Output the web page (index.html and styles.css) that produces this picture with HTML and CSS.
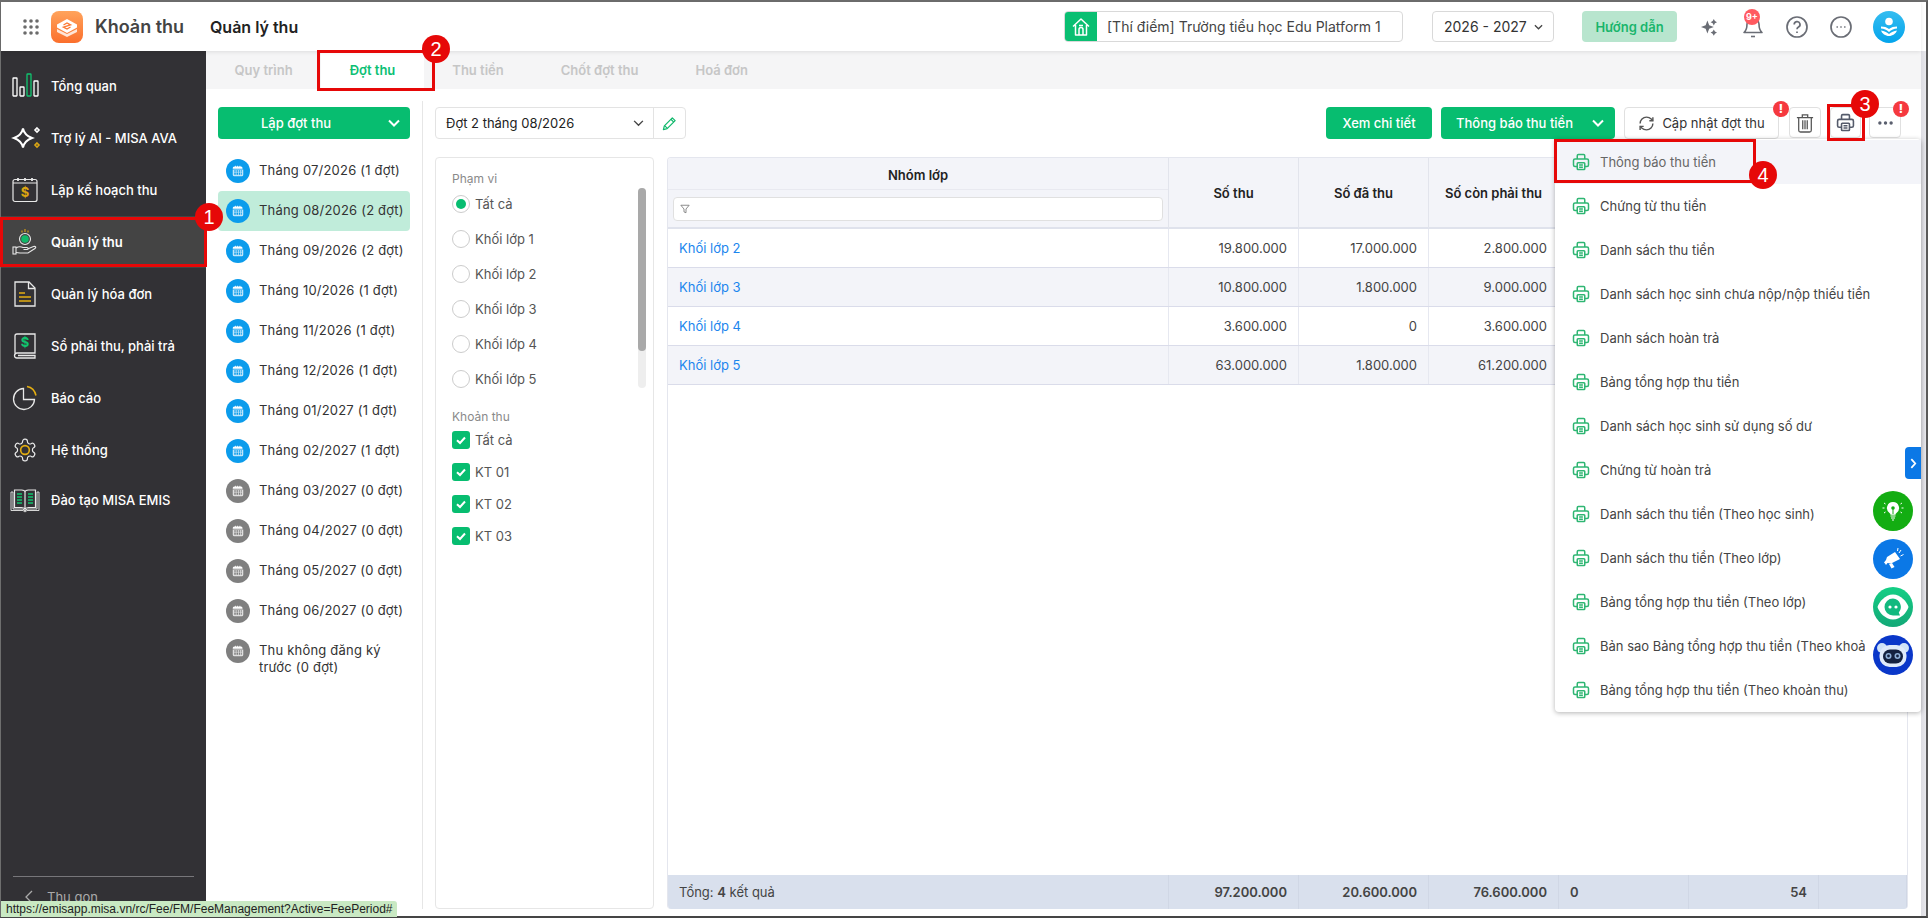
FILE: index.html
```html
<!DOCTYPE html>
<html lang="vi">
<head>
<meta charset="utf-8">
<title>Quản lý thu</title>
<link rel="stylesheet" href="styles.css">
</head>
<body>
<svg class="defs" aria-hidden="true">
    <symbol id="ic-print" viewBox="0 0 24 24">
        <path d="M7 8V3.500A1.500 1.500 0 0 1 8.500 2h7A1.500 1.500 0 0 1 17 3.500V8"/>
        <path d="M7 18H4a2 2 0 0 1-2-2v-6a2 2 0 0 1 2-2h16a2 2 0 0 1 2 2v6a2 2 0 0 1-2 2h-3"/>
        <rect x="7" y="13" width="10" height="9" rx="1"/>
        <path d="M9.500 16h5M9.500 19h5"/>
    </symbol>
    <symbol id="ic-cal" viewBox="0 0 16 16">
        <path fill="#fff" d="M3 2h1V1h1v1h2V1h1v1h2V1h1v1h1a2 2 0 0 1 2 2v1H1V4a2 2 0 0 1 2-2z"/>
        <path fill="#fff" fill-opacity=".75" d="M1 6h14v7a2 2 0 0 1-2 2H3a2 2 0 0 1-2-2z"/>
        <path fill="currentColor" d="M3 7h2v2H3zM6 7h2v2H6zM9 7h2v2H9zM12 7h1v2h-1zM3 10h2v3H3zM6 10h2v3H6zM9 10h2v3H9zM12 10h1v3h-1z"/>
    </symbol>
    <symbol id="ic-check" viewBox="0 0 18 18">
        <path d="M5 9.200l3 2.800 5-5.500"/>
    </symbol>
</svg>

<div class="window">
    <header class="topbar">
        <svg class="apps" viewBox="0 0 16 16" fill="#6b6b6b">
            <circle cx="2" cy="2" r="1.800"/><circle cx="8" cy="2" r="1.800"/><circle cx="14" cy="2" r="1.800"/>
            <circle cx="2" cy="8" r="1.800"/><circle cx="8" cy="8" r="1.800"/><circle cx="14" cy="8" r="1.800"/>
            <circle cx="2" cy="14" r="1.800"/><circle cx="8" cy="14" r="1.800"/><circle cx="14" cy="14" r="1.800"/>
        </svg>
        <svg class="logo" viewBox="0 0 32 32">
            <defs>
                <linearGradient id="logo-bg" x1="0" y1="0" x2="0" y2="1">
                    <stop offset="0" stop-color="#ffa35c"/>
                    <stop offset="1" stop-color="#fb6f2c"/>
                </linearGradient>
            </defs>
            <rect width="32" height="32" rx="8" fill="url(#logo-bg)"/>
            <path fill="#fff" fill-opacity=".8" d="M6 18l10 5 10-5v3l-10 5-10-5z"/>
            <path fill="#fff" d="M16 8l10 5.500v3L16 22 6 16.500v-3z"/>
            <path fill="none" stroke="#fb7a36" stroke-width="1.400" d="M12.500 14l3.500-2 3.500 1.800-7 2.400 3.500 1.800 3.500-2"/>
        </svg>
        <span class="app-name">Khoản thu</span>
        <span class="page-name">Quản lý thu</span>
        <div class="top-right">
            <div class="school">
                <span class="school-icon">
                    <svg viewBox="0 0 20 20" width="20" height="20" fill="none" stroke="#fff" stroke-width="1.500" stroke-linejoin="round">
                        <path d="M2 9.500L10 2l8 7.500M4.500 8v10h11V8"/>
                        <path d="M8 18v-5.500a2 2 0 0 1 4 0V18M8 8.500h4"/>
                    </svg>
                </span>
                <span class="school-name">[Thí điểm] Trường tiểu học Edu Platform 1</span>
            </div>
            <div class="year">
                <span>2026 - 2027</span>
                <svg viewBox="0 0 10 6" width="9" height="6" fill="none" stroke="#444" stroke-width="1.400"><path d="M1 1l4 4 4-4"/></svg>
            </div>
            <div class="guide">Hướng dẫn</div>
            <svg class="top-icon" viewBox="-3 -3 30 30" fill="#6a6d75">
                <path d="M9 5l2.200 5.800L17 13l-5.800 2.200L9 21l-2.200-5.800L1 13l5.800-2.200z" transform="translate(1 -1)"/>
                <path d="M18 2l1.400 2.600L22 6l-2.600 1.400L18 10l-1.400-2.600L14 6l2.600-1.400z"/>
                <path d="M18 15l1.400 2.600L22 19l-2.600 1.400L18 23l-1.400-2.600L14 19l2.600-1.400z"/>
            </svg>
            <div class="bell">
                <svg class="top-icon" viewBox="0 0 24 24" fill="none" stroke="#6a6d75" stroke-width="1.600" stroke-linejoin="round">
                    <path d="M6 9a6 6 0 0 1 12 0c0 6 3 8.500 3 8.500H3s3-2.500 3-8.500"/>
                    <path d="M10 21.500h4"/>
                </svg>
                <span class="bell-count">9+</span>
            </div>
            <svg class="top-icon" viewBox="0 0 24 24" fill="none" stroke="#6a6d75" stroke-width="1.700">
                <circle cx="12" cy="12" r="10"/>
                <path d="M9.200 9.500a2.900 2.900 0 1 1 4.300 2.500c-1 .6-1.500 1.200-1.500 2.200"/>
                <path d="M12 16.500v1.400"/>
            </svg>
            <svg class="top-icon" viewBox="0 0 24 24" fill="none" stroke="#6a6d75" stroke-width="1.700">
                <circle cx="12" cy="12" r="10"/>
                <path d="M7.500 12h1.400M11.300 12h1.400M15.100 12h1.400"/>
            </svg>
            <svg class="avatar" viewBox="0 0 32 32">
                <defs>
                    <linearGradient id="avatar-bg" x1="0" y1="0" x2="0" y2="1">
                        <stop offset="0" stop-color="#35bdf0"/>
                        <stop offset="1" stop-color="#03a4ec"/>
                    </linearGradient>
                </defs>
                <circle cx="16" cy="16" r="16" fill="url(#avatar-bg)"/>
                <circle cx="16" cy="10.500" r="3.800" fill="#fff"/>
                <path fill="#fff" d="M8 15.500c3 0 6 .8 8 2.500 2-1.700 5-2.500 8-2.500v2c-3 .3-5.600 1.300-8 3.500-2.400-2.200-5-3.200-8-3.500z"/>
                <path fill="#fff" d="M8 19.500c3 .5 5.800 1.500 8 3.500 2.200-2 5-3 8-3.500-1 3-4.500 5.500-8 5.500s-7-2.500-8-5.500z"/>
            </svg>
        </div>
    </header>

    <div class="body">
        <nav class="sidebar">
            <a class="nav-item">
                <svg class="nav-icon" viewBox="0 0 26 26" fill="none" stroke="#fff" stroke-width="1.300">
                    <rect x="1" y="5" width="4" height="18" rx=".5"/>
                    <rect x="8" y="14" width="4" height="9" rx=".5"/>
                    <rect x="15" y="1" width="4" height="22" rx=".5" stroke="#10c46f"/>
                    <rect x="22" y="8" width="4" height="15" rx=".5"/>
                </svg>
                <span>Tổng quan</span>
            </a>
            <a class="nav-item">
                <svg class="nav-icon" viewBox="0 0 26 26" fill="none" stroke="#fff" stroke-width="1.600">
                    <path d="M11 3.500c1 5 3.500 7.500 9 9.500-5.500 2-8 4.500-9 9.500-1-5-3.500-7.500-9-9.500 5.500-2 8-4.500 9-9.500z" stroke-width="2"/>
                    <path d="M25 3l2 2-2 2-2-2z"/>
                    <path d="M25 18l2 2-2 2-2-2z" stroke="#d9a514"/>
                </svg>
                <span>Trợ lý AI - MISA AVA</span>
            </a>
            <a class="nav-item">
                <svg class="nav-icon" viewBox="0 0 26 26" fill="none" stroke="#e8e8e8" stroke-width="1.200">
                    <rect x="1" y="2.500" width="24" height="22" rx="2"/>
                    <path d="M1 6h24" stroke-width="1"/>
                    <path d="M6 1v3M13 1v3M20 1v3" stroke-width="1.800"/>
                    <text class="nav-dollar" x="13" y="20" fill="#dba511" stroke="none">$</text>
                </svg>
                <span>Lập kế hoạch thu</span>
            </a>
            <a class="nav-item active">
                <svg class="nav-icon" viewBox="0 0 26 26" fill="none" stroke="#e8e8e8" stroke-width="1.100">
                    <circle cx="13" cy="10" r="5.500"/>
                    <circle cx="13" cy="10" r="3.800" fill="#10b868" stroke="none"/>
                    <path d="M10 1.500v2M13 0v3M16 1.500v2" stroke="#dba511"/>
                    <rect x="1" y="18" width="3" height="7"/>
                    <path d="M4 19c3-2 5-1.500 7-.5h4c1.500 0 1.500 2 0 2h-3.500M15.500 20l6-2.500c2-.5 3 1 1.500 2L16 24H8l-4-.5"/>
                </svg>
                <span>Quản lý thu</span>
            </a>
            <a class="nav-item">
                <svg class="nav-icon" viewBox="0 0 26 26" fill="none" stroke="#e8e8e8" stroke-width="1.300">
                    <path d="M3 1h14l6 6v18H3z"/>
                    <path d="M16.500 1v6.500H23"/>
                    <path d="M7 12h6M7 16h12M7 20h12" stroke="#e3ad12" stroke-width="1.600"/>
                </svg>
                <span>Quản lý hóa đơn</span>
            </a>
            <a class="nav-item">
                <svg class="nav-icon" viewBox="0 0 26 26" fill="none" stroke="#e8e8e8" stroke-width="1.300">
                    <path d="M3 22V3a2 2 0 0 1 2-2h18v19H5a2.500 2.500 0 0 0 0 5h18v-2.500H6"/>
                    <text class="nav-dollar" x="13" y="14" fill="#10c46f" stroke="none">$</text>
                </svg>
                <span>Sổ phải thu, phải trả</span>
            </a>
            <a class="nav-item">
                <svg class="nav-icon" viewBox="0 0 26 26" fill="none" stroke="#e8e8e8" stroke-width="1.300">
                    <path d="M11.500 3.500a10.500 10.500 0 1 0 11 11h-11z"/>
                    <path d="M15 1.500c4.500.8 8 4.500 9 9" stroke="#e3ad12" stroke-width="1.500"/>
                </svg>
                <span>Báo cáo</span>
            </a>
            <a class="nav-item">
                <svg class="nav-icon" viewBox="0 0 24 24" fill="none" stroke="#e8e8e8" stroke-width="1.100">
                    <path d="M12.220 2h-.44a2 2 0 0 0-2 2v.18a2 2 0 0 1-1 1.730l-.43.25a2 2 0 0 1-2 0l-.15-.08a2 2 0 0 0-2.730.73l-.22.38a2 2 0 0 0 .73 2.730l.15.1a2 2 0 0 1 1 1.720v.51a2 2 0 0 1-1 1.740l-.15.09a2 2 0 0 0-.73 2.730l.22.38a2 2 0 0 0 2.730.73l.15-.08a2 2 0 0 1 2 0l.43.25a2 2 0 0 1 1 1.730V20a2 2 0 0 0 2 2h.44a2 2 0 0 0 2-2v-.18a2 2 0 0 1 1-1.730l.43-.25a2 2 0 0 1 2 0l.15.08a2 2 0 0 0 2.730-.73l.22-.39a2 2 0 0 0-.73-2.730l-.15-.08a2 2 0 0 1-1-1.740v-.5a2 2 0 0 1 1-1.740l.15-.09a2 2 0 0 0 .73-2.730l-.22-.38a2 2 0 0 0-2.730-.73l-.15.08a2 2 0 0 1-2 0l-.43-.25a2 2 0 0 1-1-1.730V4a2 2 0 0 0-2-2z"/>
                    <circle cx="12" cy="12" r="4" stroke="#e3ad12" stroke-width="1.500"/>
                </svg>
                <span>Hệ thống</span>
            </a>
            <a class="nav-item last">
                <svg class="nav-icon" viewBox="0 0 26 26" fill="none" stroke="#e8e8e8" stroke-width="1.200">
                    <path d="M-1 5h2v17h10l2 2 2-2h10V5h2v18.500H15l-2 1.500-2-1.500H-1z" stroke-width=".9"/>
                    <path d="M2.500 3h7c2 0 3.500 1 3.500 2.500V22c-1-1-2-1.500-3.500-1.500h-7zM23.500 3h-7C14.500 3 13 4 13 5.500V22c1-1 2-1.500 3.500-1.500h7z"/>
                    <path d="M5 7h5M5 10h5M5 13h5M5 16h5M16 7h5M16 10h5M16 13h5M16 16h5" stroke="#10c46f" stroke-width="1.600"/>
                </svg>
                <span>Đào tạo MISA EMIS</span>
            </a>
            <div class="collapse">
                <svg viewBox="0 0 8 14" width="8" height="14" fill="none" stroke="#aaa" stroke-width="1.300"><path d="M7 1L1 7l6 6"/></svg>
                <span>Thu gọn</span>
            </div>
        </nav>

        <main class="main">
            <div class="tabs">
                <div class="tab">Quy trình</div>
                <div class="tab selected">Đợt thu</div>
                <div class="tab">Thu tiền</div>
                <div class="tab">Chốt đợt thu</div>
                <div class="tab">Hoá đơn</div>
            </div>

            <div class="work">
                <aside class="periods">
                    <div class="create-btn">
                        <span class="create-label">Lập đợt thu</span>
                        <svg class="create-arrow" viewBox="0 0 12 8" width="12" height="8" fill="none" stroke="#fff" stroke-width="2"><path d="M1 1.500l5 5 5-5"/></svg>
                    </div>
                    <ul class="period-list">
                        <li class="period"><span class="period-dot"><svg><use href="#ic-cal"/></svg></span><span class="period-text">Tháng 07/2026 (1 đợt)</span></li>
                        <li class="period current"><span class="period-dot"><svg><use href="#ic-cal"/></svg></span><span class="period-text">Tháng 08/2026 (2 đợt)</span></li>
                        <li class="period"><span class="period-dot"><svg><use href="#ic-cal"/></svg></span><span class="period-text">Tháng 09/2026 (2 đợt)</span></li>
                        <li class="period"><span class="period-dot"><svg><use href="#ic-cal"/></svg></span><span class="period-text">Tháng 10/2026 (1 đợt)</span></li>
                        <li class="period"><span class="period-dot"><svg><use href="#ic-cal"/></svg></span><span class="period-text">Tháng 11/2026 (1 đợt)</span></li>
                        <li class="period"><span class="period-dot"><svg><use href="#ic-cal"/></svg></span><span class="period-text">Tháng 12/2026 (1 đợt)</span></li>
                        <li class="period"><span class="period-dot"><svg><use href="#ic-cal"/></svg></span><span class="period-text">Tháng 01/2027 (1 đợt)</span></li>
                        <li class="period"><span class="period-dot"><svg><use href="#ic-cal"/></svg></span><span class="period-text">Tháng 02/2027 (1 đợt)</span></li>
                        <li class="period empty"><span class="period-dot"><svg><use href="#ic-cal"/></svg></span><span class="period-text">Tháng 03/2027 (0 đợt)</span></li>
                        <li class="period empty"><span class="period-dot"><svg><use href="#ic-cal"/></svg></span><span class="period-text">Tháng 04/2027 (0 đợt)</span></li>
                        <li class="period empty"><span class="period-dot"><svg><use href="#ic-cal"/></svg></span><span class="period-text">Tháng 05/2027 (0 đợt)</span></li>
                        <li class="period empty"><span class="period-dot"><svg><use href="#ic-cal"/></svg></span><span class="period-text">Tháng 06/2027 (0 đợt)</span></li>
                        <li class="period empty"><span class="period-dot"><svg><use href="#ic-cal"/></svg></span><span class="period-text">Thu không đăng ký trước (0 đợt)</span></li>
                    </ul>
                </aside>

                <section class="detail">
                    <div class="toolbar">
                        <div class="batch">
                            <div class="batch-name">
                                <span>Đợt 2 tháng 08/2026</span>
                                <svg viewBox="0 0 12 8" width="11" height="7" fill="none" stroke="#444" stroke-width="1.600"><path d="M1 1l5 5 5-5"/></svg>
                            </div>
                            <div class="batch-edit">
                                <svg viewBox="0 0 16 16" width="15" height="15" fill="none" stroke="#11b86c" stroke-width="1.300" stroke-linejoin="round">
                                    <path d="M11 2l3 3-8.500 8.500L1.500 14.500 2.500 10.500z"/>
                                    <path d="M9.500 3.500l3 3M3 10.500l2.500 2.500"/>
                                </svg>
                            </div>
                        </div>
                        <div class="actions">
                            <div class="btn-green detail-btn">Xem chi tiết</div>
                            <div class="btn-green notice-btn">
                                <span>Thông báo thu tiền</span>
                                <svg viewBox="0 0 12 8" width="12" height="8" fill="none" stroke="#fff" stroke-width="2"><path d="M1 1.500l5 5 5-5"/></svg>
                            </div>
                            <div class="btn-line update-btn">
                                <svg viewBox="0 0 24 24" width="17" height="17" fill="none" stroke="#555" stroke-width="2">
                                    <path d="M3 12a9 9 0 0 1 9-9 9.750 9.750 0 0 1 6.740 2.740L21 8"/>
                                    <path d="M21 3v5h-5"/>
                                    <path d="M21 12a9 9 0 0 1-9 9 9.750 9.750 0 0 1-6.740-2.740L3 16"/>
                                    <path d="M8 16H3v5"/>
                                </svg>
                                <span>Cập nhật đợt thu</span>
                            </div>
                            <div class="btn-line icon-btn">
                                <svg viewBox="0 0 20 22" width="18" height="20" fill="none" stroke="#555" stroke-width="1.400">
                                    <path d="M1 5h18M7 5V2h6v3"/>
                                    <path d="M3 5v14a2 2 0 0 0 2 2h10a2 2 0 0 0 2-2V5"/>
                                    <path d="M7.500 8v10M10 8v10M12.500 8v10"/>
                                </svg>
                            </div>
                            <div class="btn-line icon-btn print-btn">
                                <svg width="19" height="19"><use href="#ic-print"/></svg>
                            </div>
                            <div class="btn-line icon-btn more-btn">
                                <svg viewBox="0 0 16 4" width="15" height="4" fill="#5a5f6e"><circle cx="2" cy="2" r="1.800"/><circle cx="8" cy="2" r="1.800"/><circle cx="14" cy="2" r="1.800"/></svg>
                            </div>
                        </div>
                    </div>

                    <div class="content">
                        <div class="filters">
                            <div class="scope">
                                <div class="filter-label">Phạm vi</div>
                                <label class="radio on"><i></i>Tất cả</label>
                                <label class="radio"><i></i>Khối lớp 1</label>
                                <label class="radio"><i></i>Khối lớp 2</label>
                                <label class="radio"><i></i>Khối lớp 3</label>
                                <label class="radio"><i></i>Khối lớp 4</label>
                                <label class="radio"><i></i>Khối lớp 5</label>
                                <div class="scroll-track"><div class="scroll-thumb"></div></div>
                            </div>
                            <div class="filter-label fees-label">Khoản thu</div>
                            <label class="check"><svg><use href="#ic-check"/></svg>Tất cả</label>
                            <label class="check"><svg><use href="#ic-check"/></svg>KT 01</label>
                            <label class="check"><svg><use href="#ic-check"/></svg>KT 02</label>
                            <label class="check"><svg><use href="#ic-check"/></svg>KT 03</label>
                        </div>

                        <div class="grid">
                            <div class="grid-row grid-head">
                                <div class="head-first">
                                    <div class="head-title">Nhóm lớp</div>
                                    <div class="head-filter">
                                        <div class="filter-input">
                                            <svg viewBox="0 0 12 12" width="10" height="10" fill="none" stroke="#777" stroke-width="1"><path d="M1 1.500h10L7.200 6v4.500L4.800 9.500V6z"/></svg>
                                        </div>
                                    </div>
                                </div>
                                <div class="head-cell">Số thu</div>
                                <div class="head-cell">Số đã thu</div>
                                <div class="head-cell">Số còn phải thu</div>
                                <div class="head-cell"></div>
                                <div class="head-cell"></div>
                                <div class="head-cell"></div>
                            </div>
                            <div class="grid-rows">
                                <div class="grid-row data">
                                    <div class="cell"><a class="link">Khối lớp 2</a></div>
                                    <div class="cell num">19.800.000</div><div class="cell num">17.000.000</div><div class="cell num">2.800.000</div>
                                    <div class="cell"></div><div class="cell"></div><div class="cell"></div>
                                </div>
                                <div class="grid-row data">
                                    <div class="cell"><a class="link">Khối lớp 3</a></div>
                                    <div class="cell num">10.800.000</div><div class="cell num">1.800.000</div><div class="cell num">9.000.000</div>
                                    <div class="cell"></div><div class="cell"></div><div class="cell"></div>
                                </div>
                                <div class="grid-row data">
                                    <div class="cell"><a class="link">Khối lớp 4</a></div>
                                    <div class="cell num">3.600.000</div><div class="cell num">0</div><div class="cell num">3.600.000</div>
                                    <div class="cell"></div><div class="cell"></div><div class="cell"></div>
                                </div>
                                <div class="grid-row data">
                                    <div class="cell"><a class="link">Khối lớp 5</a></div>
                                    <div class="cell num">63.000.000</div><div class="cell num">1.800.000</div><div class="cell num">61.200.000</div>
                                    <div class="cell"></div><div class="cell"></div><div class="cell"></div>
                                </div>
                            </div>
                            <div class="grid-row grid-foot">
                                <div class="cell foot-label">Tổng: <b>4</b> kết quả</div>
                                <div class="cell num">97.200.000</div>
                                <div class="cell num">20.600.000</div>
                                <div class="cell num">76.600.000</div>
                                <div class="cell">0</div>
                                <div class="cell num">54</div>
                                <div class="cell"></div>
                            </div>
                        </div>
                    </div>
                </section>
            </div>
        </main>
        <div class="edge"></div>
    </div>

    <!-- menu mo tu nut in -->
    <ul class="print-menu">
        <li class="hover"><svg><use href="#ic-print"/></svg>Thông báo thu tiền</li>
        <li><svg><use href="#ic-print"/></svg>Chứng từ thu tiền</li>
        <li><svg><use href="#ic-print"/></svg>Danh sách thu tiền</li>
        <li><svg><use href="#ic-print"/></svg>Danh sách học sinh chưa nộp/nộp thiếu tiền</li>
        <li><svg><use href="#ic-print"/></svg>Danh sách hoàn trả</li>
        <li><svg><use href="#ic-print"/></svg>Bảng tổng hợp thu tiền</li>
        <li><svg><use href="#ic-print"/></svg>Danh sách học sinh sử dụng số dư</li>
        <li><svg><use href="#ic-print"/></svg>Chứng từ hoàn trả</li>
        <li><svg><use href="#ic-print"/></svg>Danh sách thu tiền (Theo học sinh)</li>
        <li><svg><use href="#ic-print"/></svg>Danh sách thu tiền (Theo lớp)</li>
        <li><svg><use href="#ic-print"/></svg>Bảng tổng hợp thu tiền (Theo lớp)</li>
        <li><svg><use href="#ic-print"/></svg>Bản sao Bảng tổng hợp thu tiền (Theo khoản thu)</li>
        <li><svg><use href="#ic-print"/></svg>Bảng tổng hợp thu tiền (Theo khoản thu)</li>
    </ul>

    <!-- khung tien ich ben phai -->
    <div class="dock-toggle">
        <svg viewBox="0 0 8 12" width="7" height="11" fill="none" stroke="#fff" stroke-width="2"><path d="M1.500 1l4.500 5-4.500 5"/></svg>
    </div>
    <div class="dock">
        <svg class="dock-item" viewBox="0 0 40 40">
            <circle cx="20" cy="20" r="20" fill="#13ad12"/>
            <path fill="#fff" d="M20 11a6 6 0 0 0-3.500 10.900c.6.500 1 1.100 1 1.800h5c0-.7.4-1.300 1-1.800A6 6 0 0 0 20 11z"/>
            <path d="M17.500 25h5M18 27h4M19 29h2" stroke="#fff" stroke-width="1.200"/>
            <circle cx="20" cy="17" r="1.800" fill="#13ad12"/>
            <path d="M20 18v5" stroke="#13ad12" stroke-width="1"/>
            <path d="M11 12l1.500 1M29 12l-1.500 1M9.500 17h2M28.500 17h2M11 22l1.500-1M29 22l-1.500-1" stroke="#fff" stroke-width="1"/>
        </svg>
        <svg class="dock-item" viewBox="0 0 40 40">
            <circle cx="20" cy="20" r="20" fill="#0b78e6"/>
            <path fill="#fff" d="M22 13l5 7-9 4.500-3.500-.5L13 26l-1-1.500-1-1 2-2.500 1-3z"/>
            <path fill="#fff" d="M16 25l3-1 2.500 4-3 1.500z"/>
            <path d="M26 14l2-3M27.500 17l3-1.500M24.500 12l.5-3" stroke="#fff" stroke-width="1"/>
        </svg>
        <svg class="dock-item" viewBox="0 0 40 40">
            <defs>
                <linearGradient id="chat-bg" x1="0" y1="0" x2="0" y2="1">
                    <stop offset="0" stop-color="#14cf85"/>
                    <stop offset="1" stop-color="#13a877"/>
                </linearGradient>
            </defs>
            <circle cx="20" cy="20" r="20" fill="url(#chat-bg)"/>
            <path fill="#fff" d="M20 7.500C12 7.500 6 15 4.500 20 6 25 12 32.500 20 32.500S34 25 35.500 20C34 15 28 7.500 20 7.500z"/>
            <path fill="#12b97f" d="M20 11.500a8.500 8.500 0 1 0 0 17h7l-1.200-3a8.500 8.500 0 0 0-5.800-14z"/>
            <circle cx="17" cy="20" r="1.600" fill="#fff"/>
            <circle cx="23" cy="20" r="1.600" fill="#fff"/>
        </svg>
        <svg class="dock-item" viewBox="0 0 40 40">
            <circle cx="20" cy="20" r="20" fill="#0a37c9"/>
            <circle cx="9" cy="13" r="5" fill="#cfe2f7"/>
            <circle cx="31" cy="13" r="5" fill="#cfe2f7"/>
            <rect x="6.500" y="10" width="27" height="22" rx="10" fill="#dfeafa"/>
            <rect x="10" y="14.500" width="20" height="14" rx="7" fill="#14213f"/>
            <circle cx="15.500" cy="21" r="3" fill="#8fb0d8"/>
            <circle cx="24.500" cy="21" r="3" fill="#8fb0d8"/>
            <circle cx="15.500" cy="21" r="1.400" fill="#14213f"/>
            <circle cx="24.500" cy="21" r="1.400" fill="#14213f"/>
        </svg>
    </div>

    <!-- khung danh dau huong dan -->
    <div class="mark mark-nav"></div>
    <div class="mark mark-tab"></div>
    <div class="mark mark-print"></div>
    <div class="mark mark-item"></div>
    <span class="step step-1">1</span>
    <span class="step step-2">2</span>
    <span class="step step-3">3</span>
    <span class="step step-4">4</span>
    <span class="alert alert-update">!</span>
    <span class="alert alert-more">!</span>

    <div class="status-url">https://emisapp.misa.vn/rc/Fee/FM/FeeManagement?Active=FeePeriod#</div>
</div>
</body>
</html>
```

FILE: styles.css
```css
* {
    margin: 0;
    padding: 0;
    box-sizing: border-box;
}

html, body {
    width: 100%;
    height: 100%;
    overflow: hidden;
    font-family: 'Inter', 'Noto Sans', sans-serif;
    font-size: 13px;
    color: #333;
    background: #fff;
}

ul {
    list-style: none;
}

.defs {
    display: none;
}

svg use {
    fill: none;
    stroke: currentColor;
    stroke-width: 2;
}

.window {
    display: flex;
    flex-direction: column;
    height: 100%;
    border-top: 2px solid #6e6e6e;
    border-bottom: 2px solid #454545;
    border-left: 1px solid #6e6e6e;
    border-right: 2px solid #5a5a5a;
    background: #fff;
}

/* header */
.topbar {
    display: flex;
    align-items: center;
    height: 49px;
    flex: none;
    padding-left: 22px;
    margin-right: 5px;
    background: #fff;
    box-shadow: 0 1px 4px rgba(0, 0, 0, 0.1);
    position: relative;
    z-index: 2;
}

.apps {
    width: 16px;
    height: 16px;
}

.logo {
    width: 32px;
    height: 32px;
    margin-left: 12px;
}

.app-name {
    margin-left: 12px;
    font-size: 18px;
    font-weight: 600;
    color: #444;
    width: 115px;
}

.page-name {
    font-size: 16px;
    font-weight: 600;
    color: #222;
}

.top-right {
    display: flex;
    align-items: center;
    margin-left: auto;
    padding-right: 16px;
}

.school {
    display: flex;
    align-items: center;
    width: 339px;
    height: 31px;
    border: 1px solid #d9d9d9;
    border-radius: 4px;
    overflow: hidden;
}

.school-icon {
    display: flex;
    align-items: center;
    justify-content: center;
    width: 32px;
    height: 100%;
    background: #0abf72;
}

.school-name {
    margin-left: 10px;
    font-size: 14px;
    color: #444;
}

.year {
    display: flex;
    align-items: center;
    justify-content: space-between;
    width: 122px;
    height: 31px;
    margin-left: 29px;
    padding: 0 10px 0 11px;
    border: 1px solid #d9d9d9;
    border-radius: 4px;
    font-size: 14px;
    color: #333;
}

.guide {
    display: flex;
    align-items: center;
    justify-content: center;
    width: 95px;
    height: 31px;
    margin-left: 28px;
    border-radius: 4px;
    background: #b8e5ce;
    color: #19b56c;
    font-weight: 600;
}

.top-icon {
    display: block;
    width: 24px;
    height: 24px;
    margin-left: 20px;
}

.bell {
    position: relative;
}

.bell-count {
    position: absolute;
    left: 23px;
    top: -6px;
    width: 16px;
    height: 16px;
    border-radius: 50%;
    background: #ff5a60;
    color: #fff;
    font-size: 9px;
    font-weight: 700;
    line-height: 16px;
    text-align: center;
}

.avatar {
    width: 32px;
    height: 32px;
    margin-left: 20px;
}

.body {
    display: flex;
    flex: 1;
    min-height: 0;
}

/* menu trai */
.sidebar {
    position: relative;
    width: 205px;
    flex: none;
    padding-top: 9px;
    background: #323135;
    color: #fff;
}

.nav-item {
    display: flex;
    align-items: center;
    gap: 13px;
    height: 52px;
    padding-left: 11px;
    font-weight: 500;
}

.nav-item.last {
    height: 48px;
}

.nav-item.active {
    background: #444;
    font-weight: 600;
}

.nav-icon {
    width: 26px;
    height: 26px;
    flex: none;
    overflow: visible;
}

.nav-dollar {
    font-family: 'Inter', sans-serif;
    font-size: 13px;
    font-weight: 700;
    text-anchor: middle;
}

.collapse {
    position: absolute;
    left: 12px;
    right: 12px;
    bottom: 0;
    display: flex;
    align-items: center;
    gap: 14px;
    height: 40px;
    padding: 1px 0 0 12px;
    border-top: 1px solid #77767a;
    color: #aaa;
}

/* noi dung */
.main {
    flex: 1;
    min-width: 0;
    display: flex;
    flex-direction: column;
}

.edge {
    width: 5px;
    flex: none;
    background: linear-gradient(90deg, #dcdce2, #e8e8ec);
}

.tabs {
    display: flex;
    height: 38px;
    flex: none;
    background: #f5f5f6;
}

.tab {
    padding: 0 28.5px;
    line-height: 38px;
    font-weight: 600;
    color: #c6c6c6;
}

.tab.selected {
    background: #fff;
    color: #0cbf74;
}

.work {
    display: flex;
    flex: 1;
    min-height: 0;
}

.periods {
    width: 217px;
    flex: none;
    margin: 12px 0 7px;
    padding: 6px 12px 0;
    border-right: 1px solid #e6e6e6;
}

.create-btn {
    display: flex;
    align-items: center;
    height: 32px;
    border-radius: 4px;
    background: #07bd70;
    color: #fff;
    font-weight: 500;
}

.create-label {
    flex: 1;
    text-align: center;
}

.create-arrow {
    margin: 0 10px 0 14px;
}

.period-list {
    margin-top: 12px;
}

.period {
    display: flex;
    align-items: flex-start;
    gap: 9px;
    padding: 8px 0 8px 8px;
    height: 40px;
    border-radius: 4px;
    color: #333;
    line-height: 17px;
}

.period.current {
    background: #c0ecda;
}

.period-dot {
    display: flex;
    align-items: center;
    justify-content: center;
    width: 24px;
    height: 24px;
    flex: none;
    border-radius: 50%;
    background: #0b9cec;
    color: #0b9cec;
}

.period.empty .period-dot {
    background: #7f7f7f;
    color: #7f7f7f;
}

.period-dot svg {
    width: 12px;
    height: 12px;
}

.period-dot svg use {
    fill: initial;
    stroke: none;
}

.period-text {
    margin-top: 3px;
    letter-spacing: 0.2px;
}

.detail {
    flex: 1;
    min-width: 0;
    display: flex;
    flex-direction: column;
    padding: 18px 13px 7px 12px;
}

.toolbar {
    display: flex;
    justify-content: space-between;
    height: 32px;
    flex: none;
    padding-right: 7px;
}

.batch {
    display: flex;
    width: 251px;
    border: 1px solid #e3e3e3;
    border-radius: 4px;
}

.batch-name {
    display: flex;
    align-items: center;
    justify-content: space-between;
    width: 218px;
    padding: 0 9px 0 10px;
    border-right: 1px solid #e3e3e3;
    color: #222;
}

.batch-edit {
    flex: 1;
    display: flex;
    align-items: center;
    justify-content: center;
}

.actions {
    display: flex;
    gap: 9px;
}

.btn-green {
    display: flex;
    align-items: center;
    height: 32px;
    border-radius: 4px;
    background: #07bd70;
    color: #fff;
    font-weight: 500;
}

.detail-btn {
    width: 106px;
    justify-content: center;
}

.notice-btn {
    width: 174px;
    justify-content: space-between;
    padding: 0 11px 0 15px;
}

.btn-line {
    display: flex;
    align-items: center;
    justify-content: center;
    height: 32px;
    border: 1px solid #e0e0e0;
    border-radius: 4px;
    color: #333;
}

.update-btn {
    width: 155px;
    gap: 7px;
    margin-right: 1px;
}

.icon-btn {
    width: 32px;
    height: 31px;
}

.print-btn {
    width: 31px;
    color: #555b6b;
}

.more-btn {
    margin-left: -1px;
}

.content {
    display: flex;
    gap: 13px;
    flex: 1;
    min-height: 0;
    margin-top: 18px;
}

.filters {
    width: 219px;
    flex: none;
    padding: 14px 0 0 16px;
    border: 1px solid #e6e6e6;
    border-radius: 4px;
    color: #555;
}

.filter-label {
    font-size: 12px;
    line-height: 14px;
    color: #8a8a8a;
}

.scope {
    position: relative;
}

.fees-label {
    margin-top: 14px;
}

.radio {
    display: flex;
    align-items: center;
    gap: 5px;
    height: 35px;
}

.radio i {
    display: flex;
    align-items: center;
    justify-content: center;
    width: 18px;
    height: 18px;
    border: 1px solid #ccc;
    border-radius: 50%;
}

.radio.on i::after {
    content: "";
    width: 10px;
    height: 10px;
    border-radius: 50%;
    background: #07bd70;
}

.scroll-track {
    position: absolute;
    left: 186px;
    top: 16px;
    width: 8px;
    height: 200px;
    border-radius: 4px;
    background: #eee;
}

.scroll-thumb {
    height: 163px;
    border-radius: 4px;
    background: #a9a9a9;
}

.check {
    display: flex;
    align-items: center;
    gap: 5px;
    height: 32px;
}

.check svg {
    width: 18px;
    height: 18px;
    border-radius: 3px;
    background: #07bd70;
    color: #fff;
}

/* bang */
.grid {
    flex: 1;
    min-width: 0;
    display: flex;
    flex-direction: column;
    border: 1px solid #e4e6ee;
    border-bottom: 0;
    border-radius: 4px;
    overflow: hidden;
}

.grid-row {
    display: grid;
    grid-template-columns: 501px repeat(5, 130px) 1fr;
}

.grid-head {
    height: 71px;
    flex: none;
    background: #f3f4f9;
    border-bottom: 2px solid #dfe2ec;
}

.head-first {
    border-right: 1px solid #e2e4ec;
}

.head-title {
    height: 32px;
    border-bottom: 1px solid #e8e9f0;
    line-height: 34px;
    text-align: center;
    font-weight: 600;
    color: #222;
}

.head-filter {
    padding: 7px 5px;
}

.filter-input {
    display: flex;
    align-items: center;
    height: 24px;
    padding-left: 6px;
    border: 1px solid #e0e0e0;
    border-radius: 4px;
    background: #fff;
}

.head-cell {
    display: flex;
    align-items: center;
    justify-content: center;
    border-right: 1px solid #e2e4ec;
    font-weight: 600;
    color: #222;
}

.grid-rows {
    flex: 1;
}

.data {
    height: 39px;
    border-bottom: 1px solid #dadcea;
}

.data:nth-child(even) {
    background: #f3f4f9;
}

.cell {
    display: flex;
    align-items: center;
    padding: 0 11px;
    border-right: 1px solid #e6e8f0;
    color: #444;
}

.num {
    justify-content: flex-end;
}

.link {
    color: #1c86ee;
}

.grid-foot {
    height: 34px;
    flex: none;
    background: #d9e0ed;
    font-weight: 600;
}

.grid-foot .cell {
    border-right-color: #d0d7e5;
    color: #444;
}

.grid-foot .foot-label {
    display: block;
    line-height: 34px;
    font-weight: 400;
}

.grid-foot b {
    font-weight: 600;
}

/* menu in */
.print-menu {
    position: absolute;
    left: 1555px;
    top: 139px;
    width: 366px;
    height: 573px;
    padding-top: 1px;
    border-radius: 0 4px 4px 4px;
    background: #fff;
    box-shadow: 0 1px 5px rgba(0, 0, 0, 0.3);
    z-index: 5;
}

.print-menu li {
    display: flex;
    align-items: center;
    gap: 10px;
    height: 44px;
    padding-left: 17px;
    color: #444;
    white-space: nowrap;
}

.print-menu li.hover {
    background: #f3f4f9;
    color: #666;
}

.print-menu svg {
    width: 18px;
    height: 20px;
    flex: none;
    color: #2fb673;
}

.dock-toggle {
    position: absolute;
    left: 1905px;
    top: 447px;
    width: 16px;
    height: 32px;
    display: flex;
    align-items: center;
    justify-content: center;
    border-radius: 4px 0 0 4px;
    background: #0b78e6;
    z-index: 6;
}

.dock {
    position: absolute;
    left: 1865px;
    top: 483px;
    width: 56px;
    height: 200px;
    display: flex;
    flex-direction: column;
    gap: 8px;
    padding: 8px 0 0 8px;
    border-radius: 8px 0 0 8px;
    background: #fff;
    z-index: 6;
}

.dock-item {
    width: 40px;
    height: 40px;
    flex: none;
}

/* danh dau */
.mark {
    position: absolute;
    border: 3px solid #e60808;
    z-index: 8;
}

.mark-nav {
    left: 0;
    top: 217px;
    width: 207px;
    height: 50px;
}

.mark-tab {
    left: 317px;
    top: 50px;
    width: 118px;
    height: 41px;
}

.mark-print {
    left: 1827px;
    top: 104px;
    width: 38px;
    height: 37px;
}

.mark-item {
    left: 1554px;
    top: 139px;
    width: 202px;
    height: 44px;
}

.step {
    position: absolute;
    width: 28px;
    height: 28px;
    border-radius: 50%;
    background: #e60808;
    color: #fff;
    font-family: 'Liberation Sans', sans-serif;
    font-size: 20px;
    line-height: 28px;
    text-align: center;
    z-index: 9;
}

.step-1 {
    left: 195px;
    top: 203px;
}

.step-2 {
    left: 422px;
    top: 35px;
}

.step-3 {
    left: 1851px;
    top: 90px;
}

.step-4 {
    left: 1749px;
    top: 161px;
}

.alert {
    position: absolute;
    width: 16px;
    height: 16px;
    border-radius: 50%;
    background: #f5393f;
    color: #fff;
    font-size: 12px;
    font-weight: 800;
    line-height: 16px;
    text-align: center;
    z-index: 7;
}

.alert-update {
    left: 1773px;
    top: 101px;
}

.alert-more {
    left: 1893px;
    top: 101px;
}

.status-url {
    position: absolute;
    left: 1px;
    top: 901px;
    width: 396px;
    height: 16px;
    padding-left: 5px;
    border-radius: 0 3px 0 0;
    background: #c9e9c3;
    color: #222;
    font-family: 'Liberation Sans', sans-serif;
    font-size: 12px;
    line-height: 17px;
    z-index: 10;
}
```
